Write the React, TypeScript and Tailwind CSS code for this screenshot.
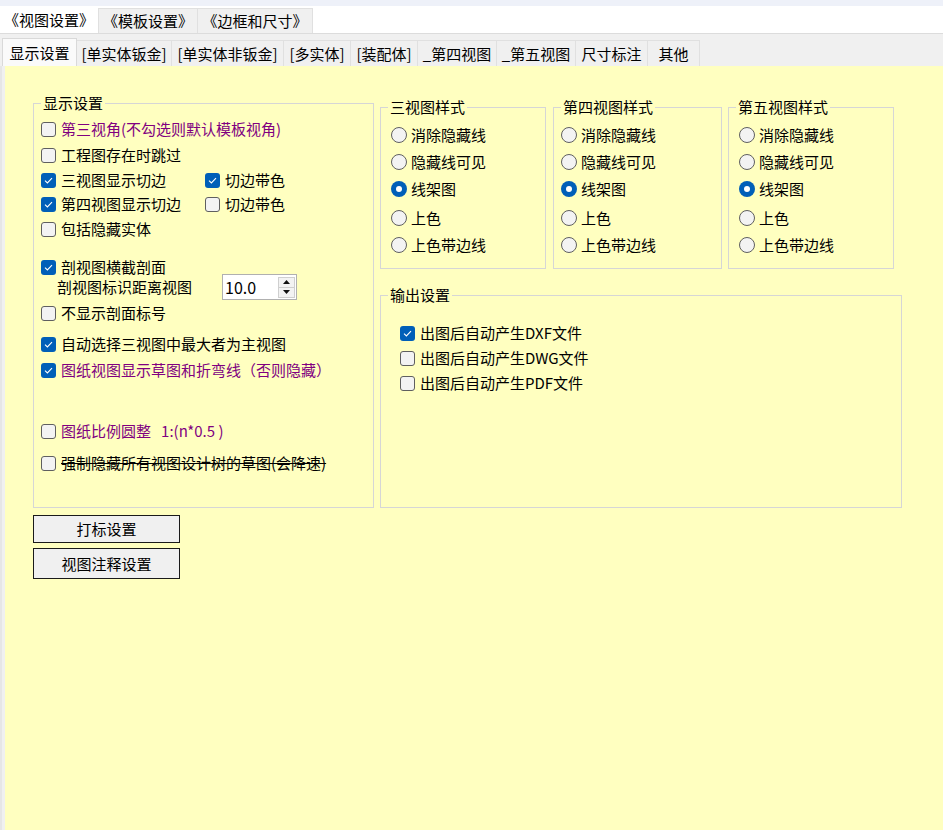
import React from 'react';

// Windows-style options dialog: view settings page

function Check({ checked }: { checked?: boolean }) {
    if (checked) {
        return (
            <span className="w-[15px] h-[15px] rounded-[3px] bg-[#005fb8] flex items-center justify-center shrink-0">
                <svg width="9" height="7" viewBox="0 0 9 7">
                    <path d="M1 3.6 L3.4 6 L8 1.2" stroke="white" strokeWidth="1.1" fill="none" />
                </svg>
            </span>
        );
    }
    return <span className="w-[15px] h-[15px] rounded-[3px] border border-[#5f5f5f] bg-[#f3f3f3] shrink-0" />;
}

function Radio({ checked }: { checked?: boolean }) {
    if (checked) {
        return (
            <span className="w-4 h-4 rounded-full bg-[#005fb8] flex items-center justify-center shrink-0">
                <span className="w-[6px] h-[6px] rounded-full bg-white" />
            </span>
        );
    }
    return <span className="w-4 h-4 rounded-full border border-[#5f5f5f] bg-[#f3f3f3] shrink-0" />;
}

function CheckRow({ checked, children, className = '' }: { checked?: boolean; children: React.ReactNode; className?: string }) {
    return (
        <div className={`flex items-center h-5 gap-[5px] ${className}`}>
            <Check checked={checked} />
            <span className="whitespace-pre">{children}</span>
        </div>
    );
}

const styles = ['消除隐藏线', '隐藏线可见', '线架图', '上色', '上色带边线'];
const radioMt = ['mt-[8px]', 'mt-[7px]', 'mt-[7px]', 'mt-[9px]', 'mt-[7px]'];

function StyleGroup({ title, className, padLeft }: { title: string; className: string; padLeft: string }) {
    return (
        <fieldset className={`border border-[#d6d6d6] h-[172px] w-[166px] ${className}`}>
            <legend className="ml-[7px] px-[2px] leading-5">{title}</legend>
            <div className={`flex flex-col ${padLeft}`}>
                {styles.map((s, i) => (
                    <div key={s} className={`flex items-center h-5 gap-[4px] ${radioMt[i]}`}>
                        <Radio checked={i === 2} />
                        <span>{s}</span>
                    </div>
                ))}
            </div>
        </fieldset>
    );
}

const subTabs = [
    { label: '[单实体钣金]', w: 'w-[95px]' },
    { label: '[单实体非钣金]', w: 'w-[112px]' },
    { label: '[多实体]', w: 'w-[67px]' },
    { label: '[装配体]', w: 'w-[67px]' },
    { label: '_第四视图', w: 'w-[79px]' },
    { label: '_第五视图', w: 'w-[79px]' },
    { label: '尺寸标注', w: 'w-[72px]' },
    { label: '其他', w: 'w-[52px]' },
];

export default function App() {
    return (
        <div className="w-[943px] h-[830px] flex flex-col bg-white text-black text-[15px] leading-5 font-['Microsoft_YaHei','Noto_Sans_CJK_SC',sans-serif] overflow-hidden">
            {/* Title strip */}
            <div className="h-[6px] bg-[#eef1f9]" />

            {/* Top tabs */}
            <div className="h-[28px] flex items-end bg-white border-b border-[#dcdcdc]">
                <div className="w-[98px] h-[27px] flex items-center justify-center bg-white">《视图设置》</div>
                <div className="w-[100px] h-[25px] flex items-center justify-center bg-[#f0f0f0] border border-b-0 border-[#e0e0e0]">《模板设置》</div>
                <div className="w-[115px] h-[25px] flex items-center justify-center bg-[#f0f0f0] border border-b-0 border-l-0 border-[#e0e0e0]">《边框和尺寸》</div>
            </div>

            {/* Sub tabs */}
            <div className="h-[32px] flex items-end bg-[#f0f0f0] pl-[2px]">
                <div className="w-[75px] h-[28px] flex items-center justify-center bg-[#fafafa] border border-b-0 border-[#d9d9d9]">显示设置</div>
                {subTabs.map(t => (
                    <div key={t.label} className={`${t.w} h-[26px] flex items-center justify-center bg-[#f0f0f0] border-t border-r border-[#e0e0e0]`}>
                        {t.label}
                    </div>
                ))}
            </div>

            {/* Page body */}
            <div className="flex-1 flex bg-[#f0f0f0] border-l-2 border-[#e6e6e6] pl-[3px]">
                <div className="flex-1 flex items-start bg-[#ffffc0] pl-[28px] pt-[27px]">
                    {/* Left column */}
                    <div className="flex flex-col w-[341px]">
                        <fieldset className="border border-[#d6d6d6] h-[415px]">
                            <legend className="ml-[7px] px-[2px] leading-5">显示设置</legend>
                            <div className="flex flex-col pl-[7px]">
                                <CheckRow className="mt-[6px] text-[#800080]">第三视角(不勾选则默认模板视角)</CheckRow>
                                <CheckRow className="mt-[6px]">工程图存在时跳过</CheckRow>
                                <div className="flex items-center mt-[5px]">
                                    <CheckRow checked className="w-[164px]">三视图显示切边</CheckRow>
                                    <CheckRow checked>切边带色</CheckRow>
                                </div>
                                <div className="flex items-center mt-[4px]">
                                    <CheckRow checked className="w-[164px]">第四视图显示切边</CheckRow>
                                    <CheckRow>切边带色</CheckRow>
                                </div>
                                <CheckRow className="mt-[5px]">包括隐藏实体</CheckRow>
                                <CheckRow checked className="mt-[18px]">剖视图横截剖面</CheckRow>
                                <div className="flex items-center h-[26px] -mt-[3px]">
                                    <span className="ml-4 w-[165px]">剖视图标识距离视图</span>
                                    <div className="w-[75px] h-[26px] flex items-center bg-white border border-[#b0b0b0]">
                                        <span className="flex-1 pl-[2px] text-[16px]">10.0</span>
                                        <div className="flex flex-col w-[17px] h-[21px] mr-[1px]">
                                            <span className="flex-1 flex items-center justify-center bg-[#f3f3f3] border border-[#cfcfcf]">
                                                <svg width="7" height="4" viewBox="0 0 7 4"><path d="M0 4 L3.5 0 L7 4 Z" fill="#111" /></svg>
                                            </span>
                                            <span className="flex-1 flex items-center justify-center bg-[#f3f3f3] border border-t-0 border-[#cfcfcf]">
                                                <svg width="7" height="4" viewBox="0 0 7 4"><path d="M0 0 L3.5 4 L7 0 Z" fill="#111" /></svg>
                                            </span>
                                        </div>
                                    </div>
                                </div>
                                <CheckRow className="mt-[3px]">不显示剖面标号</CheckRow>
                                <CheckRow checked className="mt-[11px]">自动选择三视图中最大者为主视图</CheckRow>
                                <CheckRow checked className="mt-[6px] text-[#800080]">图纸视图显示草图和折弯线（否则隐藏）</CheckRow>
                                <CheckRow className="mt-[41px] text-[#800080]">{'图纸比例圆整   1:(n*0.5 )'}</CheckRow>
                                <CheckRow className="mt-[12px]">
                                    <span className="line-through">强制隐藏所有视图设计树的草图(会降速)</span>
                                </CheckRow>
                            </div>
                        </fieldset>
                        <button className="mt-[7px] w-[147px] h-[28px] flex items-center justify-center bg-[#f0f0f0] border border-[#1a1a1a]">打标设置</button>
                        <button className="mt-[5px] w-[147px] h-[31px] flex items-center justify-center bg-[#f0f0f0] border border-[#1a1a1a]">视图注释设置</button>
                    </div>

                    {/* Right column */}
                    <div className="flex flex-col ml-[6px] mt-[4px] w-[522px]">
                        <div className="flex items-start">
                            <StyleGroup title="三视图样式" className="" padLeft="pl-[10px]" />
                            <StyleGroup title="第四视图样式" className="ml-[7px] w-[169px]" padLeft="pl-[7px]" />
                            <StyleGroup title="第五视图样式" className="ml-[6px]" padLeft="pl-[10px]" />
                        </div>
                        <fieldset className="mt-[16px] border border-[#d6d6d6] h-[223px]">
                            <legend className="ml-[7px] px-[2px] leading-5">输出设置</legend>
                            <div className="flex flex-col pl-[19px]">
                                <CheckRow checked className="mt-[18px]">出图后自动产生DXF文件</CheckRow>
                                <CheckRow className="mt-[5px]">出图后自动产生DWG文件</CheckRow>
                                <CheckRow className="mt-[5px]">出图后自动产生PDF文件</CheckRow>
                            </div>
                        </fieldset>
                    </div>
                </div>
            </div>
        </div>
    );
}
